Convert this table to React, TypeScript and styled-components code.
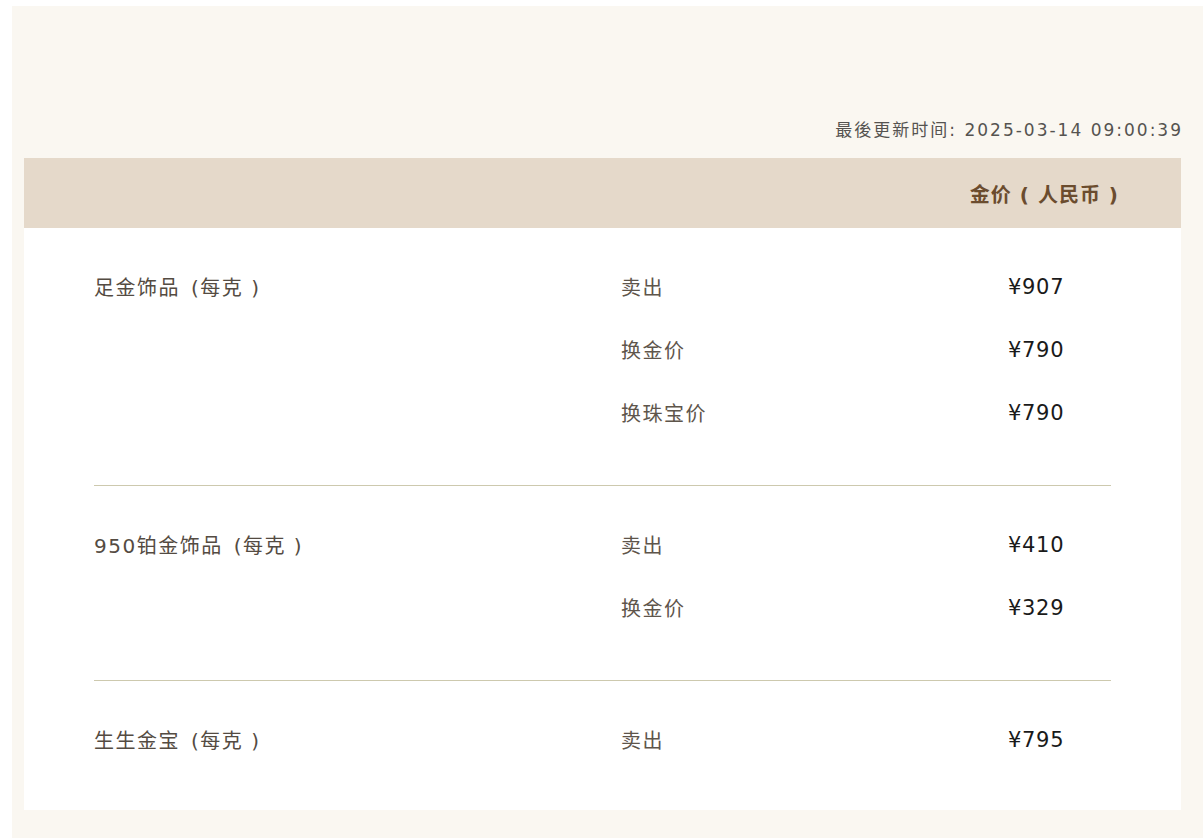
import React from "react";
import styled, { createGlobalStyle } from "styled-components";

const GlobalStyle = createGlobalStyle`
  html, body { margin: 0; padding: 0; background: #ffffff; }
  body { font-family: "DejaVu Sans", "Noto Sans CJK SC", sans-serif; }
`;

const Page = styled.div`
  padding: 6px 0 0 12px;
  min-height: 832px;
  box-sizing: border-box;
`;

const Panel = styled.div`
  background: #faf7f1;
  padding: 0 22px 30px 12px;
  min-height: 832px;
  box-sizing: border-box;
`;

const Updated = styled.div`
  display: flex;
  justify-content: flex-end;
  padding-top: 112px;
  margin-bottom: 16px;
  margin-right: -2px;
  font-family: "DejaVu Sans", "Noto Sans CJK SC", sans-serif;
  font-size: 17px;
  line-height: 24px;
  letter-spacing: 2px;
  color: #555350;
`;

const HeaderBar = styled.div`
  height: 70px;
  background: #e5d9ca;
  display: flex;
  align-items: center;
  justify-content: flex-end;
  padding-right: 62px;
`;

const HeaderTitle = styled.span`
  font-family: "DejaVu Sans", "Noto Sans CJK SC", sans-serif;
  font-size: 20px;
  font-weight: 700;
  letter-spacing: 1px;
  color: #6b4c2e;
  white-space: pre;
`;

const Card = styled.div`
  background: #ffffff;
`;

const Group = styled.div<{ $first?: boolean; $last?: boolean }>`
  margin: 0 70px;
  padding: 27px 0 ${(p) => (p.$last ? 39 : 41)}px;
  border-top: ${(p) => (p.$first ? "none" : "1px solid #cdc9ae")};
  display: grid;
  grid-template-columns: 527px 387px 1fr;
  grid-auto-rows: 63px;
  align-items: center;
`;

const Label = styled.div`
  grid-column: 1;
  font-family: "DejaVu Sans", "Noto Sans CJK SC", sans-serif;
  font-size: 20px;
  letter-spacing: 1.5px;
  color: #544b42;
  white-space: pre;
`;

const Unit = styled.span`
  margin-left: 11px;
`;

const Kind = styled.div`
  grid-column: 2;
  font-family: "Noto Sans CJK SC", sans-serif;
  font-size: 20px;
  letter-spacing: 1.5px;
  color: #5e554b;
`;

const Price = styled.div`
  grid-column: 3;
  font-family: "DejaVu Sans", sans-serif;
  font-size: 21px;
  letter-spacing: 0.7px;
  color: #1a1a1a;
`;

type Item = { label: string; rows: [string, string][] };

const data: Item[] = [
  {
    label: "足金饰品",
    rows: [
      ["卖出", "¥907"],
      ["换金价", "¥790"],
      ["换珠宝价", "¥790"],
    ],
  },
  {
    label: "950铂金饰品",
    rows: [
      ["卖出", "¥410"],
      ["换金价", "¥329"],
    ],
  },
  {
    label: "生生金宝",
    rows: [["卖出", "¥795"]],
  },
];

export default function App() {
  return (
    <>
      <GlobalStyle />
      <Page>
        <Panel>
          <Updated>最後更新时间: 2025-03-14 09:00:39</Updated>
          <HeaderBar>
            <HeaderTitle>金价 ( 人民币 )</HeaderTitle>
          </HeaderBar>
          <Card>
            {data.map((item, gi) => (
              <Group key={gi} $first={gi === 0} $last={gi === data.length - 1}>
                {item.rows.map(([kind, price], ri) => (
                  <React.Fragment key={ri}>
                    {ri === 0 ? (
                      <Label>
                        {item.label}
                        <Unit>(每克 )</Unit>
                      </Label>
                    ) : (
                      <Label />
                    )}
                    <Kind>{kind}</Kind>
                    <Price>{price}</Price>
                  </React.Fragment>
                ))}
              </Group>
            ))}
          </Card>
        </Panel>
      </Page>
    </>
  );
}
